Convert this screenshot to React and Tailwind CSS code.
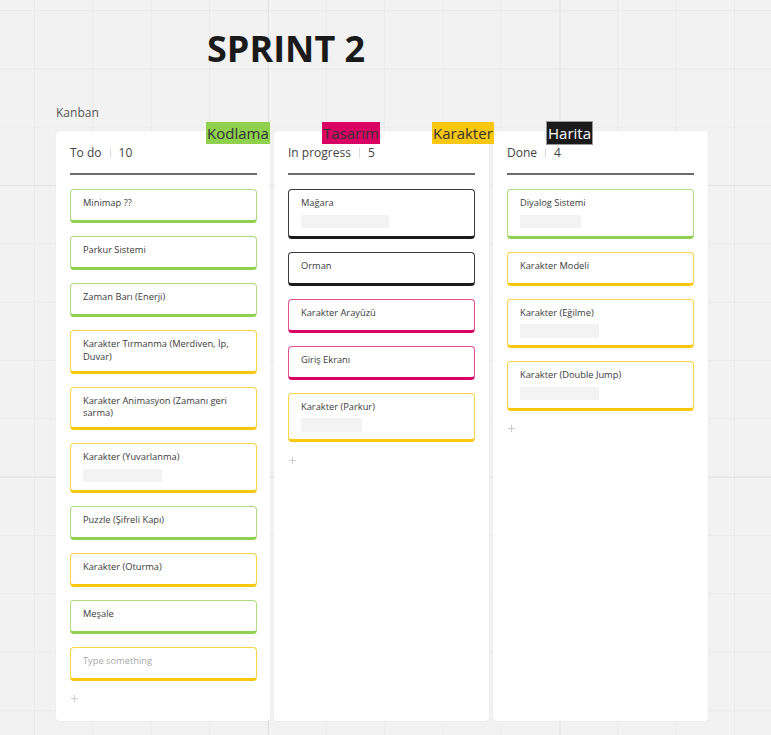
import React from 'react';

// ---------------------------------------------------------------------------
// Board data
// ---------------------------------------------------------------------------
const COLUMNS = [
  {
    title: 'To do',
    count: 10,
    width: 'w-[214px] pr-[13px]',
    cards: [
      { text: 'Minimap ??', tone: 'green' },
      { text: 'Parkur Sistemi', tone: 'green' },
      { text: 'Zaman Barı (Enerji)', tone: 'green' },
      { text: 'Karakter Tırmanma (Merdiven, İp, Duvar)', tone: 'yellow' },
      { text: 'Karakter Animasyon (Zamanı geri sarma)', tone: 'yellow' },
      { text: 'Karakter (Yuvarlanma)', tone: 'yellow', bar: 'w-[79px]' },
      { text: 'Puzzle (Şifreli Kapı)', tone: 'green' },
      { text: 'Karakter (Oturma)', tone: 'yellow' },
      { text: 'Meşale', tone: 'green' },
      { text: 'Type something', tone: 'yellow', placeholder: true },
    ],
  },
  {
    title: 'In progress',
    count: 5,
    width: 'w-[215px] pr-[14px]',
    cards: [
      { text: 'Mağara', tone: 'black', bar: 'w-[88px]' },
      { text: 'Orman', tone: 'black' },
      { text: 'Karakter Arayüzü', tone: 'pink' },
      { text: 'Giriş Ekranı', tone: 'pink' },
      { text: 'Karakter (Parkur)', tone: 'yellow', bar: 'w-[61px]' },
    ],
  },
  {
    title: 'Done',
    count: 4,
    width: 'w-[215px] pr-[14px]',
    cards: [
      { text: 'Diyalog Sistemi', tone: 'green', bar: 'w-[61px]' },
      { text: 'Karakter Modeli', tone: 'yellow' },
      { text: 'Karakter (Eğilme)', tone: 'yellow', bar: 'w-[79px]' },
      { text: 'Karakter (Double Jump)', tone: 'yellow', bar: 'w-[79px]' },
    ],
  },
];

const TONES = {
  green: 'border-[#acdd80] border-b-[#8fd14f]',
  yellow: 'border-[#fbd347] border-b-[#fac710]',
  pink: 'border-[#e24f8f] border-b-[#da0063]',
  black: 'border-[#3a3a3a] border-b-[#1a1a1a]',
};

// Tag labels floating over the board top edge
const TAGS = [
  { label: 'Kodlama', cls: 'left-[150px] bg-[#8fd14f] text-[#333]' },
  { label: 'Tasarım', cls: 'left-[266px] bg-[#da0063] text-[#333]' },
  { label: 'Karakter', cls: 'left-[376px] bg-[#fac710] text-[#333]' },
  { label: 'Harita', cls: 'left-[491px] bg-[#1a1a1a] text-white outline outline-1 outline-[#9a9a9a]' },
];

function Card({ text, tone, bar, placeholder }) {
  return (
    <div
      className={`min-h-[34px] rounded-[4px] border border-b-[3px] bg-white pl-[12px] pr-[12px] pt-[7px] pb-[7.5px] ${TONES[tone]}`}
    >
      <p
        className={`text-[9.3px] leading-[12.5px] ${placeholder ? 'text-[#a8a8a8]' : 'text-[#3a3a3a]'}`}
      >
        {text}
      </p>
      {bar && <div className={`mt-[5px] h-[13.5px] bg-[#f3f3f3] ${bar}`} />}
    </div>
  );
}

function PlusIcon() {
  return (
    <svg width="7" height="7" viewBox="0 0 7 7" className="ml-[1px]">
      <path d="M3.5 0v7M0 3.5h7" stroke="#cccccc" strokeWidth="1" />
    </svg>
  );
}

function Column({ title, count, cards, width }) {
  return (
    <div className={`${width} rounded-[4px] bg-white pl-[14px] pt-[14px] pb-[19px] shadow-[0_0_2px_rgba(0,0,0,0.07)]`}>
      {/* Header */}
      <div className="flex h-[16px] items-center text-[12px] leading-[16px] text-[#444]">
        <span>{title}</span>
        <span className="mx-[8px] h-[10px] w-px bg-[#dddddd]" />
        <span>{count}</span>
      </div>
      <div className="mt-[12px] h-[2px] bg-[#6b6b6b]" />

      {/* Cards */}
      <div className="mt-[14px] flex flex-col gap-[13px]">
        {cards.map((c) => (
          <Card key={c.text} {...c} />
        ))}
      </div>

      <div className="mt-[14.5px] flex h-[7px] items-center">
        <PlusIcon />
      </div>
    </div>
  );
}

export default function App() {
  return (
    <div className="min-h-screen w-full bg-[#f2f2f2] bg-[image:linear-gradient(to_right,#e3e3e3_1px,transparent_1px),linear-gradient(to_bottom,#e3e3e3_1px,transparent_1px),linear-gradient(to_right,#eaeaea_1px,transparent_1px),linear-gradient(to_bottom,#eaeaea_1px,transparent_1px)] bg-[size:291.67px_291.67px,291.67px_291.67px,58.33px_58.33px,58.33px_58.33px] bg-[position:268px_185px,268px_185px,34px_10px,34px_10px] pb-[15px] font-['Open_Sans',sans-serif]">
      {/* Title */}
      <h1 className="pl-[207px] pt-[30.5px] text-[36px] font-bold leading-none text-[#1a1a1a]">
        SPRINT 2
      </h1>

      {/* Frame label */}
      <div className="mt-[38px] pl-[56px] text-[12px] leading-[16px] text-[#555]">Kanban</div>

      {/* Board */}
      <div className="relative ml-[56px] mt-[10.5px] flex w-fit items-stretch gap-[4px]">
        {COLUMNS.map((col) => (
          <Column key={col.title} {...col} />
        ))}

        {TAGS.map((t) => (
          <span
            key={t.label}
            className={`absolute top-[-9px] h-[22px] px-[1px] text-[15px] leading-[22px] ${t.cls}`}
          >
            {t.label}
          </span>
        ))}
      </div>
    </div>
  );
}
